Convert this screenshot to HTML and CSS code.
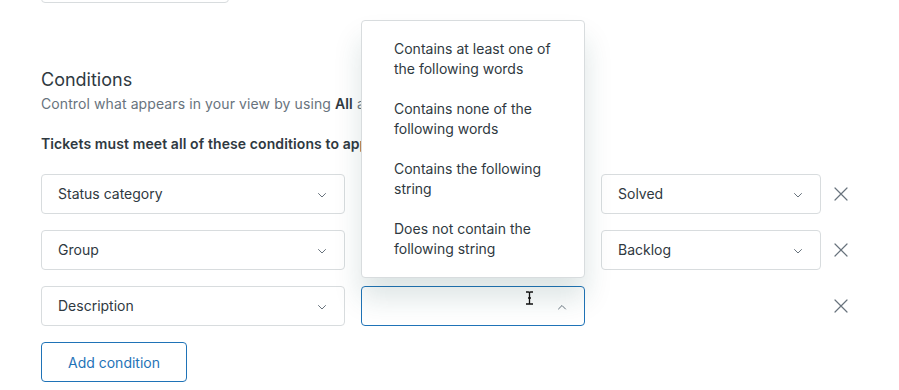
FILE: index.html
```html
<!DOCTYPE html>
<html lang="en">

<head>
  <meta charset="UTF-8" />
  <meta name="viewport" content="width=device-width, initial-scale=1.0" />
  <title>View conditions</title>
  <link rel="stylesheet" href="styles.css">
</head>

<body>
  <div class="page">
    <div class="prev-field"></div>

    <section class="conditions">
      <h2 class="title">Conditions</h2>
      <p class="hint">Control what appears in your view by using <b>All</b> and <b>Any</b> conditions.</p>
      <p class="rule">Tickets must meet all of these conditions to appear in the view</p>

      <div class="rows">
        <div class="row">
          <div class="select col-field">Status category
            <svg class="chevron" viewBox="0 0 12 12"><path d="M2.5 4.5l3.5 3.5 3.5-3.5" /></svg>
          </div>
          <div class="select col-op">Is
            <svg class="chevron" viewBox="0 0 12 12"><path d="M2.5 4.5l3.5 3.5 3.5-3.5" /></svg>
          </div>
          <div class="select col-value">Solved
            <svg class="chevron" viewBox="0 0 12 12"><path d="M2.5 4.5l3.5 3.5 3.5-3.5" /></svg>
          </div>
          <button class="remove" aria-label="Remove condition">
            <svg viewBox="0 0 16 16"><path d="M2 2l12 12M14 2L2 14" /></svg>
          </button>
        </div>
        <div class="row">
          <div class="select col-field">Group
            <svg class="chevron" viewBox="0 0 12 12"><path d="M2.5 4.5l3.5 3.5 3.5-3.5" /></svg>
          </div>
          <div class="select col-op">Is
            <svg class="chevron" viewBox="0 0 12 12"><path d="M2.5 4.5l3.5 3.5 3.5-3.5" /></svg>
          </div>
          <div class="select col-value">Backlog
            <svg class="chevron" viewBox="0 0 12 12"><path d="M2.5 4.5l3.5 3.5 3.5-3.5" /></svg>
          </div>
          <button class="remove" aria-label="Remove condition">
            <svg viewBox="0 0 16 16"><path d="M2 2l12 12M14 2L2 14" /></svg>
          </button>
        </div>
        <div class="row">
          <div class="select col-field">Description
            <svg class="chevron" viewBox="0 0 12 12"><path d="M2.5 4.5l3.5 3.5 3.5-3.5" /></svg>
          </div>
          <div class="select col-op is-open">
            <svg class="chevron" viewBox="0 0 12 12"><path d="M2.5 8l3.5-3.5 3.5 3.5" /></svg>
          </div>
          <div class="col-value"></div>
          <button class="remove" aria-label="Remove condition">
            <svg viewBox="0 0 16 16"><path d="M2 2l12 12M14 2L2 14" /></svg>
          </button>
        </div>
      </div>

      <button class="add-condition">Add condition</button>
    </section>

    <ul class="menu">
      <li class="menu-item">Contains at least one of the following words</li>
      <li class="menu-item">Contains none of the following words</li>
      <li class="menu-item">Contains the following string</li>
      <li class="menu-item">Does not contain the following string</li>
    </ul>

    <!-- mouse pointer over the open operator field -->
    <svg class="cursor" viewBox="0 0 9 14">
      <path d="M1 1h2.5q1 0 1 1v10q0 1 1 1H8M1 13h2.5q1 0 1-1M4.5 2q0-1 1-1H8M3 7h3" />
    </svg>
  </div>
</body>

</html>
```

FILE: styles.css
```css
* {
  box-sizing: border-box;
}

html,
body {
  margin: 0;
  background: #fff;
}

body {
  font-family: Inter, 'Liberation Sans', sans-serif;
  font-size: 14px;
  line-height: 20px;
  color: #2f3941;
}

.page {
  position: relative;
  width: 899px;
  height: 390px;
  overflow: hidden;
  padding-left: 41px;
}

.prev-field {
  width: 188px;
  height: 40px;
  margin-top: -37px;
  border: 1px solid #d8dcde;
  border-radius: 4px;
}

.title {
  margin: 65px 0 0;
  font-size: 18px;
  line-height: 24px;
  font-weight: 400;
}

.hint {
  margin: 2px 0 0;
  color: #68737d;
  letter-spacing: 0.1px;
}

.hint b {
  color: #2f3941;
  font-weight: 600;
}

.rule {
  margin: 20px 0 0;
  font-weight: 600;
  letter-spacing: 0.1px;
}

.rows {
  margin-top: 20px;
  display: flex;
  flex-direction: column;
  gap: 16px;
}

.row {
  display: flex;
  align-items: center;
}

.select {
  position: relative;
  height: 40px;
  padding: 0 40px 0 16px;
  border: 1px solid #d8dcde;
  border-radius: 4px;
  display: flex;
  align-items: center;
  white-space: nowrap;
}

.select.is-open {
  border-color: #1f73b7;
}

.col-field {
  width: 304px;
  margin-right: 16px;
}

.col-op {
  width: 224px;
  margin-right: 16px;
}

.col-value {
  width: 220px;
  height: 40px;
}

.chevron {
  position: absolute;
  right: 16px;
  top: 14px;
  width: 12px;
  height: 12px;
  fill: none;
  stroke: #68737d;
  stroke-width: 1;
  stroke-linecap: round;
  stroke-linejoin: round;
}

.remove {
  width: 40px;
  height: 40px;
  padding: 0;
  border: 0;
  background: none;
  display: flex;
  align-items: center;
  justify-content: center;
}

.remove svg {
  width: 16px;
  height: 16px;
  fill: none;
  stroke: #68737d;
  stroke-width: 1.2;
  stroke-linecap: round;
}

.add-condition {
  margin-top: 16px;
  width: 146px;
  height: 40px;
  border: 1px solid #1f73b7;
  border-radius: 4px;
  background: #fff;
  color: #1f73b7;
  font-family: inherit;
  font-size: 14px;
}

.menu {
  position: absolute;
  top: 20px;
  left: 361px;
  width: 224px;
  margin: 0;
  padding: 8px 0;
  list-style: none;
  background: #fff;
  border: 1px solid #d8dcde;
  border-radius: 4px;
  box-shadow: 0 20px 28px 0 rgba(23, 73, 77, 0.15);
}

.menu-item {
  padding: 10px 24px 10px 32px;
}

.cursor {
  position: absolute;
  left: 525px;
  top: 291px;
  width: 9px;
  height: 14px;
  fill: none;
  stroke: #111;
  stroke-width: 1.3;
}
```
